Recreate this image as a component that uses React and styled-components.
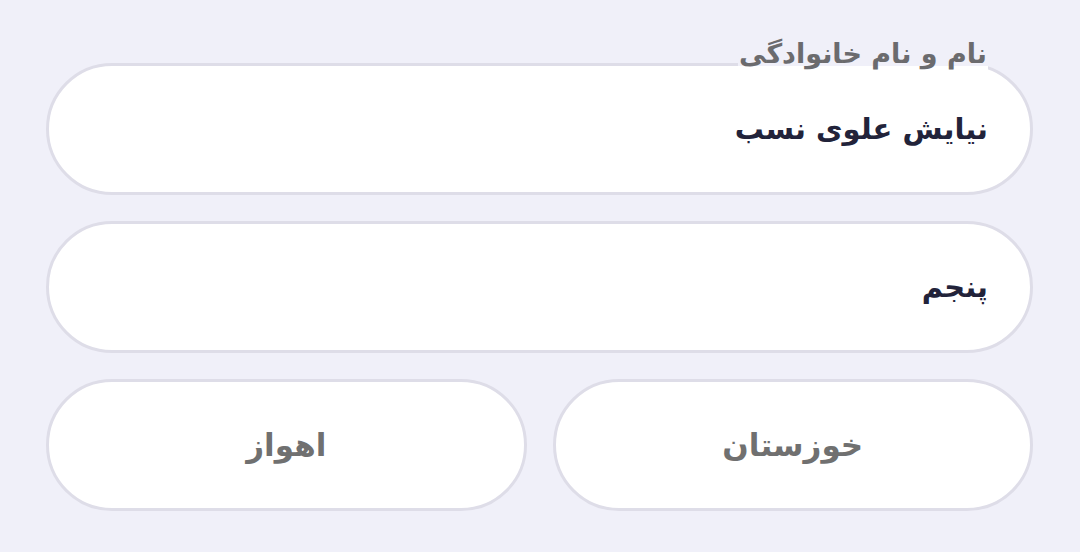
import React from "react";
import styled, { createGlobalStyle } from "styled-components";

const GlobalStyle = createGlobalStyle`
  html, body {
    margin: 0;
    padding: 0;
    background: #f0f0f9;
  }
  body {
    font-family: "DejaVu Sans", "Noto Sans", sans-serif;
  }
`;

// Page wrapper
const Page = styled.div`
  direction: rtl;
  width: 1080px;
  height: 552px;
  box-sizing: border-box;
  padding: 63px 47px 0 46px;
  display: flex;
  flex-direction: column;
  gap: 26px;
  background: #f0f0f9;
`;

// Pill shaped input box
const Field = styled.div`
  position: relative;
  height: 132px;
  box-sizing: border-box;
  border: 3px solid #dedde8;
  border-radius: 66px;
  background: #ffffff;
  display: flex;
  align-items: center;
  justify-content: ${(p) => (p.$center ? "center" : "flex-start")};
  padding: 0 42px;
  flex: ${(p) => (p.$center ? "1" : "none")};
`;

// Floating label over the top border
const Label = styled.span`
  position: absolute;
  top: -32px;
  right: 42px;
  padding: 0 1px;
  font-size: 27px;
  font-weight: 700;
  color: #6b6b6e;
  line-height: 40px;
  background: linear-gradient(#f0f0f9 80%, #ffffff 80%);
`;

const Value = styled.span`
  font-size: ${(p) => (p.$muted ? "31px" : "29px")};
  font-weight: 700;
  color: ${(p) => (p.$muted ? "#707070" : "#22233a")};
`;

const Row = styled.div`
  display: flex;
  gap: 26px;
`;

export default function App() {
  return (
    <>
      <GlobalStyle />
      <Page>
        <Field>
          <Label>نام و نام خانوادگی</Label>
          <Value>نیایش علوی نسب</Value>
        </Field>
        <Field>
          <Value>پنجم</Value>
        </Field>
        <Row>
          <Field $center>
            <Value $muted>خوزستان</Value>
          </Field>
          <Field $center>
            <Value $muted>اهواز</Value>
          </Field>
        </Row>
      </Page>
    </>
  );
}
